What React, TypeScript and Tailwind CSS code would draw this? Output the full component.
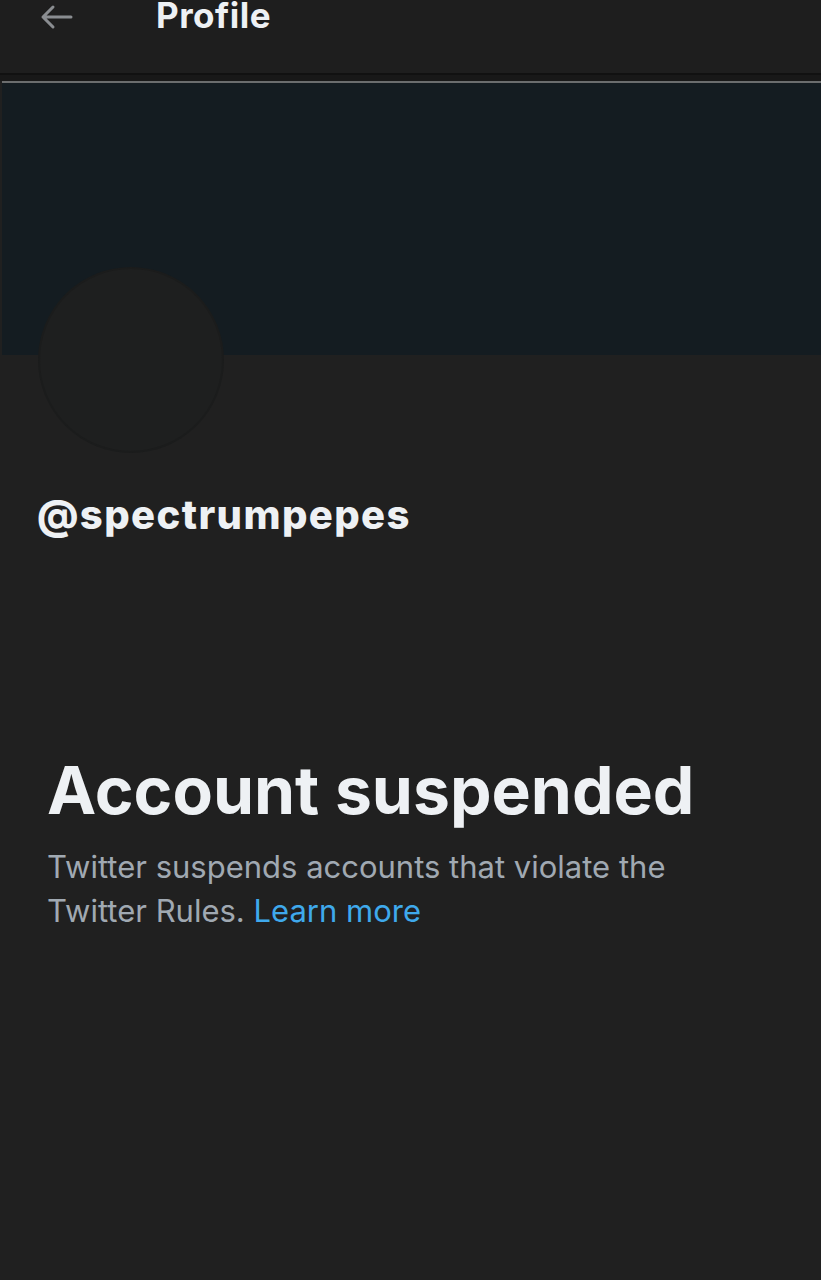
import React from "react";

export default function App() {
  return (
    <div
      className="w-[821px] h-[1280px] bg-[#202020] overflow-hidden flex flex-col"
      style={{ fontFamily: "Inter, 'Noto Sans', sans-serif" }}
    >
      <div className="h-[73px] bg-[#1e1e1e] flex items-start shrink-0 relative">
        <svg
          className="absolute left-[40px] top-[4px]"
          width="33"
          height="26"
          viewBox="0 0 33 26"
          fill="none"
          stroke="#8a8d91"
          strokeWidth="3"
          strokeLinecap="round"
          strokeLinejoin="round"
        >
          <path d="M31 13H3M13 3L3 13l10 10" />
        </svg>
        <div className="ml-[156px] -mt-[7px] text-[35px] leading-[44px] font-bold text-[#eef1f4] tracking-[0.5px]">
          Profile
        </div>
      </div>
      <div className="h-[8px] bg-[#181818] shrink-0 border-t-2 border-[#111111]" />
      <div className="h-[2px] bg-[#6b6d6e] shrink-0 ml-[2px]" />
      <div className="h-[272px] bg-[#141c21] shrink-0 ml-[2px] relative">
        <div className="absolute left-[36px] top-[184px] w-[186px] h-[186px] rounded-full bg-[#1e1f1f] border-2 border-[#1b1c1c]" />
      </div>
      <div className="pl-[37px] pt-[136px] text-[40px] leading-[48px] font-extrabold text-[#eef1f4] tracking-[1.4px]">
        @spectrumpepes
      </div>
      <div className="pl-[47px] pt-[211px]">
        <div className="text-[66px] leading-[80px] font-bold text-[#eef1f4]">
          Account suspended
        </div>
        <div className="mt-[15px] text-[31px] leading-[44px] text-[#a0a9b2] w-[680px]">
          Twitter suspends accounts that violate the Twitter Rules.{" "}
          <span className="text-[#3fa9ec]">Learn more</span>
        </div>
      </div>
    </div>
  );
}
